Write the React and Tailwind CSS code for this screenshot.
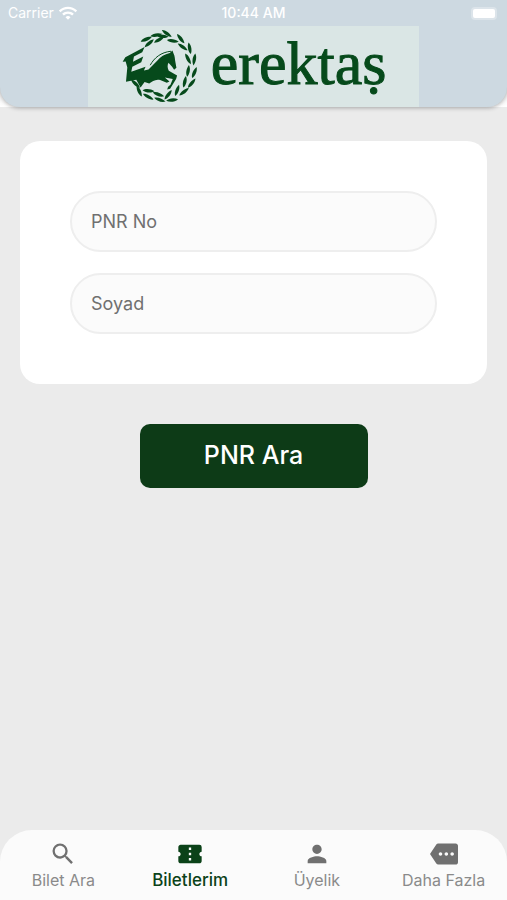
import { MdConfirmationNumber, MdMore, MdPerson, MdSearch, MdWifi } from "react-icons/md"

// x, y and rotation of every leaf in the wreath
const leaves = [
  [106, 54, -20], [115, 66, -38], [136, 41, -8], [145, 55, -28],
  [168, 36, 38], [155, 45, 8], [186, 59, 12], [210, 52, 55],
  [216, 77, 38], [237, 81, 82], [232, 113, 65], [251, 115, 102],
  [232, 149, -78], [251, 154, -65], [222, 182, -75], [243, 186, -48],
  [199, 208, -68], [220, 212, -35], [172, 221, -50], [184, 237, -4],
  [74, 188, 45], [85, 210, 68], [113, 209, 8], [112, 227, 32],
  [143, 220, 22], [147, 236, 22],
]

const tabs = [
  { label: "Bilet Ara", icon: MdSearch },
  { label: "Biletlerim", icon: MdConfirmationNumber, active: true },
  { label: "Üyelik", icon: MdPerson },
  { label: "Daha Fazla", icon: MdMore },
]

function Emblem() {
  return (
    <svg viewBox="30 20 235 232" className="h-[77px] w-[78px] shrink-0" fill="#064a1b" aria-hidden="true">
      {leaves.map(([x, y, r]) => (
        <path key={`${x}-${y}`} d="M-18 1C-10-6 6-7 18-1C8 7-8 7-18 1Z" transform={`translate(${x} ${y}) rotate(${r})`} />
      ))}
      <path d="M35 122L43 108L101 77L94 93L69 106L66 122L97 106L91 123L64 137L61 152L104 137L99 148L113 145C121 138 128 130 139 119C149 106 161 99 177 95L185 88L188 96C193 104 192 115 194 123L197 140L190 146L184 137L173 125C169 133 170 142 174 149L199 163L196 174L178 203L169 205L172 197L179 191L186 174L162 169L176 181L168 185L148 177C134 173 124 182 115 187L101 183L89 199L76 176L45 182L49 139L44 121Z" />
      <path d="M118 132C130 110 150 93 181 90" fill="none" stroke="#064a1b" strokeWidth="3" />
    </svg>
  )
}

function Header() {
  return (
    <div className="bg-gradient-to-b from-white/0 from-80% to-white to-100%">
      <header className="rounded-b-[20px] bg-[#cdd9e1] shadow-[0_1px_4px_rgba(0,0,0,0.3)]">
        <div className="grid h-[26px] grid-cols-3 items-center px-2 text-[14px] leading-4 text-white">
          <div className="flex items-center gap-1">
            <span>Carrier</span>
            <MdWifi className="size-5" />
          </div>
          <span className="text-center font-medium whitespace-nowrap">10:44 AM</span>
          <span className="mr-1 h-[9px] w-[22px] justify-self-end rounded-[2px] bg-white ring-2 ring-white/30" />
        </div>
        <div className="mx-[88px] flex h-[81px] items-center justify-center gap-3 bg-[#dae6e5]">
          <Emblem />
          <h1 className="pb-2 font-['Liberation_Serif',serif] text-[62px] leading-[68px] text-[#064a1b] [-webkit-text-stroke:1px_#064a1b]">erektaṣ</h1>
        </div>
      </header>
    </div>
  )
}

function Field({ name, label }) {
  return (
    <input
      name={name}
      type="text"
      aria-label={label}
      placeholder={label}
      className="h-[61px] w-full rounded-full border-2 border-[#eeeeee] bg-[#fbfbfb] px-[19px] text-[18px] text-gray-700 placeholder:text-[#707070]"
    />
  )
}

function App() {
  return (
    <div className="flex min-h-screen flex-col bg-[#ebebeb] font-['Inter',sans-serif]">
      <Header />
      <main className="flex-grow px-5 pt-[34px]">
        <form>
          <div className="flex flex-col gap-[21px] rounded-[20px] bg-white px-[50px] py-[50px]">
            <Field name="pnr" label="PNR No" />
            <Field name="surname" label="Soyad" />
          </div>
          <button type="button" className="mx-auto mt-10 block h-16 w-[228px] rounded-[10px] bg-[#0d3b17] text-[25px] font-medium text-white">
            PNR Ara
          </button>
        </form>
      </main>
      <nav className="grid h-[70px] grid-cols-4 rounded-t-[32px] bg-[#fbfbfb]">
        {tabs.map(({ label, icon: Icon, active }) => (
          <button
            key={label}
            type="button"
            className={active ? "flex flex-col items-center pt-[10px] text-[#0b4218]" : "flex flex-col items-center pt-[10px] text-[#707070]"}
          >
            <Icon className="size-7" />
            <span className={active ? "text-[17px] leading-6 font-medium" : "text-[16px] leading-6 text-[#8a8a8a]"}>{label}</span>
          </button>
        ))}
      </nav>
    </div>
  )
}

export default App
